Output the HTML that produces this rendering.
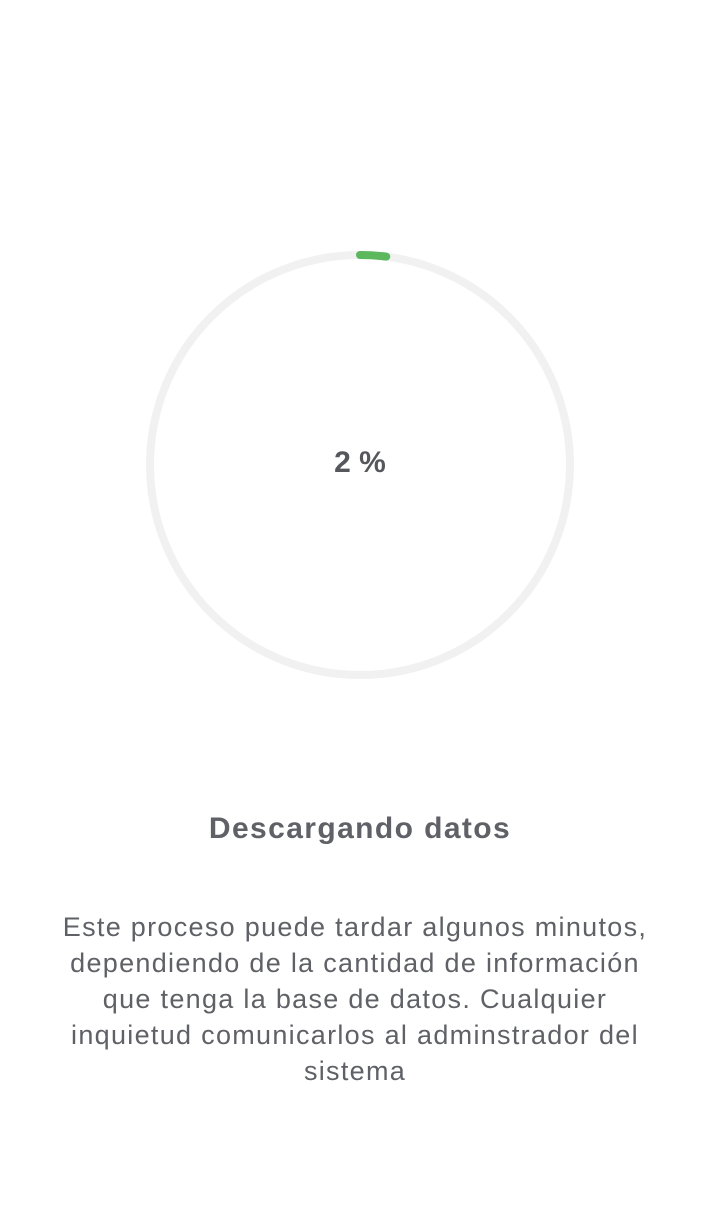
<!DOCTYPE html>
<html><head><meta charset="utf-8"><style>
html,body{margin:0;padding:0;background:#fff;width:720px;height:1213px;overflow:hidden;font-family:"Liberation Sans",sans-serif;color:#5f6166}
svg{position:absolute;left:0;top:0}
.pct{position:absolute;left:0;width:720px;top:446px;text-align:center;font-weight:bold;font-size:30px;line-height:34px;color:#55575c}
.title{position:absolute;left:0;width:720px;top:810px;text-align:center;font-weight:bold;font-size:30px;line-height:38px;color:#5f6166;letter-spacing:1.4px}
.p{position:absolute;left:10px;width:690px;top:909px;text-align:center;font-size:27px;line-height:36px;color:#5f6166;letter-spacing:1.3px}
</style></head><body>
<svg width="720" height="1213">
<circle cx="360" cy="465" r="210" fill="none" stroke="#f1f1f1" stroke-width="8"/>
<path d="M360 255 A210 210 0 0 1 386.3 256.65" fill="none" stroke="#5cb85c" stroke-width="8" stroke-linecap="round"/>
</svg>
<div class="pct">2 %</div>
<div class="title">Descargando datos</div>
<div class="p">Este proceso puede tardar algunos minutos,<br>dependiendo de la cantidad de información<br>que tenga la base de datos. Cualquier<br>inquietud comunicarlos al adminstrador del<br>sistema</div>
</body></html>
